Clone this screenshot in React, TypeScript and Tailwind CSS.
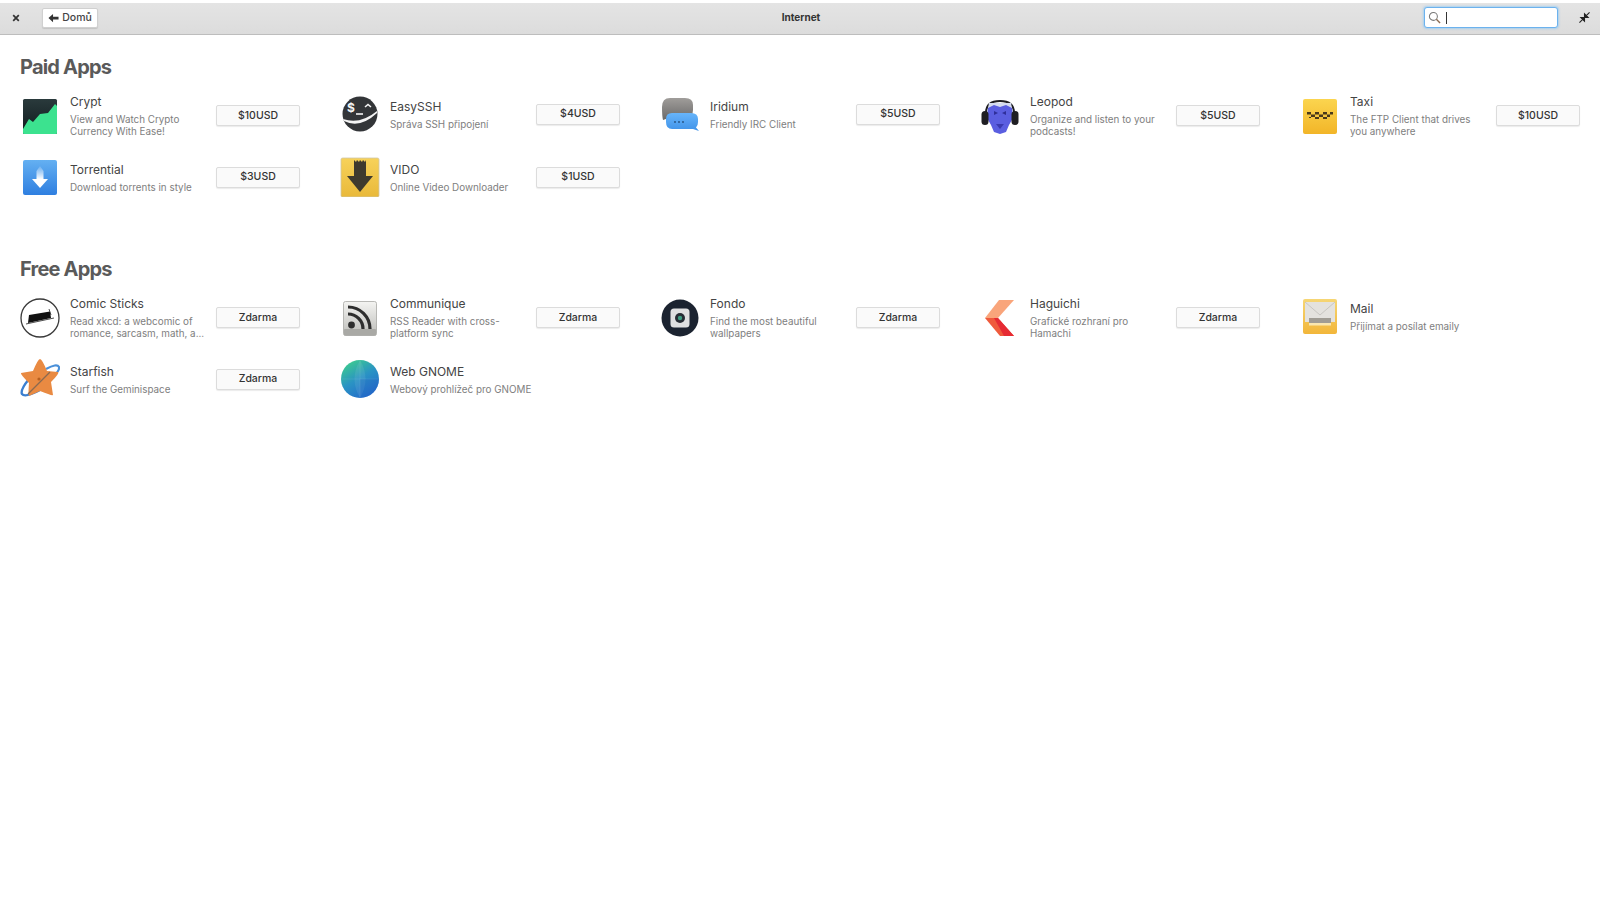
import type { ReactNode } from "react";

type AppItem = {
  name: string;
  description: string;
  price?: string;
  icon: ReactNode;
};

const CryptIcon = (
  <svg viewBox="0 0 40 40" className="h-10 w-10">
    <defs>
      <linearGradient id="crypt-bg" x1="0" y1="0" x2="0" y2="1">
        <stop offset="0" stopColor="#2a3a3c" />
        <stop offset="1" stopColor="#0f1a1d" />
      </linearGradient>
    </defs>
    <rect x="3" y="3" width="34" height="35" rx="1.5" fill="url(#crypt-bg)" />
    <path
      d="M3 33 L9 23 L13 26 L20 18 L28 17 L35 8 L37 10 L37 36.5 Q37 38 35.5 38 L4.5 38 Q3 38 3 36.5 Z"
      fill="#3ce28f"
    />
  </svg>
);

const TorrentialIcon = (
  <svg viewBox="0 0 40 40" className="h-10 w-10">
    <defs>
      <linearGradient id="torrent-bg" x1="0" y1="0" x2="0" y2="1">
        <stop offset="0" stopColor="#64b0f2" />
        <stop offset="1" stopColor="#2f7fe0" />
      </linearGradient>
      <linearGradient id="torrent-arrow" x1="0" y1="0" x2="0" y2="1">
        <stop offset="0" stopColor="#ffffff" stopOpacity="0.1" />
        <stop offset="0.6" stopColor="#ffffff" />
      </linearGradient>
    </defs>
    <rect x="3" y="3" width="34" height="35" rx="2" fill="url(#torrent-bg)" />
    <path
      d="M20 9 L23.5 14 L23.5 22 L28 22 L20 31 L12 22 L16.5 22 L16.5 14 Z"
      fill="url(#torrent-arrow)"
    />
  </svg>
);

const EasySshIcon = (
  <svg viewBox="0 0 40 40" className="h-10 w-10">
    <circle cx="20" cy="20" r="17.5" fill="#333538" />
    <path d="M3 25 Q20 31 37 17 L37 19 Q20 35 4 27 Z" fill="#f4f4f4" />
    <text x="7" y="18" fontSize="12" fontWeight="700" fill="#f4f4f4" fontFamily="Inter, sans-serif">
      $
    </text>
    <path d="M16 20 H23" stroke="#f4f4f4" strokeWidth="1.6" />
    <path d="M25 13 L28 10.5 L31 13" stroke="#f4f4f4" strokeWidth="1.6" fill="none" />
  </svg>
);

const IridiumIcon = (
  <svg viewBox="0 0 40 40" className="h-10 w-10">
    <defs>
      <linearGradient id="iridium-gray" x1="0" y1="0" x2="0" y2="1">
        <stop offset="0" stopColor="#a09d9a" />
        <stop offset="1" stopColor="#6a6a6a" />
      </linearGradient>
      <linearGradient id="iridium-blue" x1="0" y1="0" x2="0" y2="1">
        <stop offset="0" stopColor="#67b5fb" />
        <stop offset="1" stopColor="#3f92e8" />
      </linearGradient>
    </defs>
    <path
      d="M10 4 H25 Q33 4 33 11 V16 Q33 24 25 24 H9 L3 26 Q2 22 2 13 Q2 4 10 4 Z"
      fill="url(#iridium-gray)"
    />
    <path
      d="M12 19 H31 Q38 19 38 25 V28 Q38 32 36 33.5 L39 37 L33 35 H12 Q6 35 6 28 V25 Q6 19 12 19 Z"
      fill="url(#iridium-blue)"
    />
    <circle cx="15" cy="28" r="0.9" fill="#25507e" />
    <circle cx="19" cy="28" r="0.9" fill="#25507e" />
    <circle cx="23" cy="28" r="0.9" fill="#25507e" />
  </svg>
);

const VidoIcon = (
  <svg viewBox="0 0 40 40" className="h-10 w-10">
    <defs>
      <linearGradient id="vido-bg" x1="0" y1="0" x2="0" y2="1">
        <stop offset="0" stopColor="#f7d25a" />
        <stop offset="1" stopColor="#e9b93a" />
      </linearGradient>
    </defs>
    <rect x="1" y="1" width="38" height="39" rx="1.5" fill="url(#vido-bg)" stroke="#cfc6a8" strokeWidth="0.8" />
    <path
      d="M14 3 L16 5 L17 3 L19 5 L20 3 L22 5 L23 3 L25 5 L26 3 V19 H33 L20 35 L7 19 H14 Z"
      fill="#3f3a2e"
    />
  </svg>
);

const LeopodIcon = (
  <svg viewBox="0 0 40 40" className="h-10 w-10">
    <path d="M6 17 Q6 5 20 5 Q34 5 34 17" stroke="#1e1e22" strokeWidth="2" fill="none" />
    <path d="M9 7 H31 L33 18 H7 Z" fill="#d5dcf0" />
    <path
      d="M8 12 L14 9 L20 11 L26 9 L32 12 L33 22 L29 29 L26 36 L20 38 L14 36 L11 29 L7 22 Z"
      fill="#5a5ee0"
    />
    <path d="M14 15 L18 17 L14 19 Z M26 15 L22 17 L26 19 Z" fill="#2f2f9a" />
    <path d="M16 28 H24 L20 33 Z" fill="#3a3ab0" />
    <rect x="1.5" y="15" width="7" height="14" rx="3.5" fill="#1e1e22" />
    <rect x="31.5" y="15" width="7" height="14" rx="3.5" fill="#1e1e22" />
  </svg>
);

const TaxiIcon = (
  <svg viewBox="0 0 40 40" className="h-10 w-10">
    <defs>
      <linearGradient id="taxi-bg" x1="0" y1="0" x2="0" y2="1">
        <stop offset="0" stopColor="#fbd54f" />
        <stop offset="1" stopColor="#f2b528" />
      </linearGradient>
    </defs>
    <rect x="3" y="3" width="34" height="35" rx="2" fill="url(#taxi-bg)" />
    <path
      d="M7 16 h4 v2.5 h-4 z M15 16 h4 v2.5 h-4 z M23 16 h4 v2.5 h-4 z M30 16 h3 v2.5 h-3 z M11 18.5 h4 v2.5 h-4 z M19 18.5 h4 v2.5 h-4 z M27 18.5 h3 v2.5 h-3 z M15 21 h4 v2 h-4 z M23 21 h4 v2 h-4 z M9 21 h2 v1 h-2 z"
      fill="#4a3a1c"
    />
  </svg>
);

const ComicSticksIcon = (
  <svg viewBox="0 0 40 40" className="h-10 w-10">
    <circle cx="20" cy="20" r="19" fill="#ffffff" stroke="#3a3a3a" strokeWidth="1.3" />
    <path d="M9 17 L30 13.5 L31 20 L8 25 Z" fill="#111111" />
    <path d="M6 26 L34 20 M29 11 L31 17" stroke="#222222" strokeWidth="0.8" />
  </svg>
);

const CommuniqueIcon = (
  <svg viewBox="0 0 40 40" className="h-10 w-10">
    <defs>
      <linearGradient id="comm-bg" x1="0" y1="0" x2="0" y2="1">
        <stop offset="0" stopColor="#f4f4f2" />
        <stop offset="1" stopColor="#bdbdb9" />
      </linearGradient>
    </defs>
    <rect x="3.5" y="3.5" width="33" height="34" rx="2" fill="url(#comm-bg)" stroke="#a8a8a4" strokeWidth="0.8" />
    <rect x="4" y="31" width="32" height="6.5" rx="1" fill="#a9a9a5" />
    <circle cx="11.5" cy="27" r="3.4" fill="#2e2e2e" />
    <path d="M8 16 A15 15 0 0 1 23 31" stroke="#2e2e2e" strokeWidth="3.2" fill="none" />
    <path d="M8 9 A22 22 0 0 1 30 31" stroke="#2e2e2e" strokeWidth="3.2" fill="none" />
  </svg>
);

const FondoIcon = (
  <svg viewBox="0 0 40 40" className="h-10 w-10">
    <circle cx="20" cy="20" r="18.5" fill="#1b2330" />
    <rect x="10.5" y="10.5" width="19" height="19" rx="3.5" fill="#dedfe0" />
    <circle cx="20" cy="20" r="5" fill="#262c34" />
    <circle cx="20" cy="20" r="2.2" fill="#3d9b80" />
  </svg>
);

const HaguichiIcon = (
  <svg viewBox="0 0 40 40" className="h-10 w-10">
    <path d="M19 2 H34 L18 20 L9 20 L5 20 Z" fill="#f9a57b" />
    <path d="M5 20 L18 20 L34 38 H20 Z" fill="#ef5a3c" />
    <path d="M14 20 H18 L34 38 H24 Z" fill="#e62a33" />
  </svg>
);

const MailIcon = (
  <svg viewBox="0 0 40 40" className="h-10 w-10">
    <defs>
      <linearGradient id="mail-bg" x1="0" y1="0" x2="0" y2="1">
        <stop offset="0" stopColor="#f6d675" />
        <stop offset="1" stopColor="#f2b63a" />
      </linearGradient>
    </defs>
    <rect x="3" y="3" width="34" height="35" rx="2" fill="url(#mail-bg)" />
    <rect x="5" y="6" width="30" height="20" fill="#e4e2de" />
    <path d="M5 6 L20 19 L35 6" stroke="#c8c6c2" strokeWidth="1" fill="none" />
    <rect x="9" y="22" width="22" height="5" fill="#a09c94" />
    <rect x="9" y="27" width="22" height="2.5" fill="#f9e6b0" />
  </svg>
);

const StarfishIcon = (
  <svg viewBox="0 0 40 40" className="h-10 w-10">
    <path d="M26 10 Q37 4 39 8 Q40 12 31 19" stroke="#4a90d9" strokeWidth="2.2" fill="none" />
    <path d="M9 20 Q0 31 2 35 Q5 39 20 31" stroke="#3b7fd0" strokeWidth="2.4" fill="none" />
    <path
      d="M20 0 Q22 0 27 12 L38 13 Q40 14 31 23 L33 36 Q32 37 20 32 L9 37 Q8 36 9 24 Q0 15 1 14 L13 12 Q18 0 20 0 Z"
      fill="#e98a42"
    />
    <path d="M8 35 L30 13" stroke="#8a6a50" strokeWidth="1.2" />
    <circle cx="19" cy="20" r="1.6" fill="#b9601f" />
  </svg>
);

const WebGnomeIcon = (
  <svg viewBox="0 0 40 40" className="h-10 w-10">
    <defs>
      <linearGradient id="web-bg" x1="0.15" y1="0" x2="0.75" y2="1">
        <stop offset="0" stopColor="#3ed08a" />
        <stop offset="0.5" stopColor="#2a93c4" />
        <stop offset="1" stopColor="#2468cc" />
      </linearGradient>
    </defs>
    <circle cx="20" cy="20" r="19" fill="url(#web-bg)" />
    <path d="M20 1 Q9 20 20 39 Q31 20 20 1 Z" fill="#ffffff" fillOpacity="0.08" />
    <path d="M20 20 H39 A19 19 0 0 1 20 39 Z" fill="#1f5fc0" fillOpacity="0.25" />
    <path d="M1 20 H39 M20 1 V39" stroke="#ffffff" strokeOpacity="0.1" strokeWidth="0.8" />
  </svg>
);

const paidApps: AppItem[] = [
  { name: "Crypt", description: "View and Watch Crypto Currency With Ease!", price: "$10USD", icon: CryptIcon },
  { name: "EasySSH", description: "Správa SSH připojení", price: "$4USD", icon: EasySshIcon },
  { name: "Iridium", description: "Friendly IRC Client", price: "$5USD", icon: IridiumIcon },
  { name: "Leopod", description: "Organize and listen to your podcasts!", price: "$5USD", icon: LeopodIcon },
  { name: "Taxi", description: "The FTP Client that drives you anywhere", price: "$10USD", icon: TaxiIcon },
  { name: "Torrential", description: "Download torrents in style", price: "$3USD", icon: TorrentialIcon },
  { name: "VIDO", description: "Online Video Downloader", price: "$1USD", icon: VidoIcon },
];

const freeApps: AppItem[] = [
  {
    name: "Comic Sticks",
    description: "Read xkcd: a webcomic of romance, sarcasm, math, a...",
    price: "Zdarma",
    icon: ComicSticksIcon,
  },
  { name: "Communique", description: "RSS Reader with cross-platform sync", price: "Zdarma", icon: CommuniqueIcon },
  { name: "Fondo", description: "Find the most beautiful wallpapers", price: "Zdarma", icon: FondoIcon },
  { name: "Haguichi", description: "Grafické rozhraní pro Hamachi", price: "Zdarma", icon: HaguichiIcon },
  { name: "Mail", description: "Přijímat a posílat emaily", icon: MailIcon },
  { name: "Starfish", description: "Surf the Geminispace", price: "Zdarma", icon: StarfishIcon },
  { name: "Web GNOME", description: "Webový prohlížeč pro GNOME", icon: WebGnomeIcon },
];

function AppRow({ app }: { app: AppItem }) {
  return (
    <div className="flex w-[280px] items-center self-start">
      <div className="h-10 w-10 shrink-0">{app.icon}</div>
      <div className="ml-[10px] min-w-0 flex-1">
        <div className="text-[12px] leading-[16px] text-[#444444]">{app.name}</div>
        <div className="mt-[3px] text-[9.85px] leading-[12px] text-[#7e7e7e]">{app.description}</div>
      </div>
      {app.price && (
        <button className="ml-[10px] h-[21px] w-[84px] shrink-0 rounded-[2px] border border-[#dcdcdc] bg-[#fafafa] text-[10.5px] font-medium text-[#333333] shadow-[0_1px_1px_rgba(0,0,0,0.08)]">
          {app.price}
        </button>
      )}
    </div>
  );
}

function Section({ title, apps }: { title: string; apps: AppItem[] }) {
  return (
    <section className="pl-5">
      <h2 className="text-[20px] leading-[26px] font-bold tracking-[-0.8px] text-[#5a5a5a]">{title}</h2>
      <div className="mt-[14px] grid grid-cols-[repeat(5,320px)] gap-y-5">
        {apps.map((app) => (
          <AppRow key={app.name} app={app} />
        ))}
      </div>
    </section>
  );
}

export default function App() {
  return (
    <div className="h-[900px] w-[1600px] overflow-hidden bg-white pt-[3px] font-['Inter',sans-serif]">
      <header className="flex h-[32px] items-center border-b border-[#bdbdbd] bg-gradient-to-b from-[#e4e4e4] to-[#dcdcdc] pb-[2px] pl-[12px] pr-[10px]">
        <div className="flex flex-1 items-center">
          <svg viewBox="0 0 10 10" className="h-2 w-2 text-[#333333]">
            <path d="M1.5 1.5 L8.5 8.5 M8.5 1.5 L1.5 8.5" stroke="currentColor" strokeWidth="2.2" />
          </svg>
          <button className="ml-[22px] flex h-[20px] w-[56px] items-center justify-center rounded-[2px] border border-[#d0d0d0] bg-white text-[10.5px] font-medium text-[#444444] shadow-[0_1px_1px_rgba(0,0,0,0.12)]">
            <svg viewBox="0 0 12 10" className="mr-[3px] h-[10px] w-[11px]">
              <path d="M0.5 5 L5.5 0.5 V3.5 H11.5 V6.5 H5.5 V9.5 Z" fill="#333333" />
            </svg>
            Domů
          </button>
        </div>
        <div className="text-[10px] font-bold text-[#333333]">Internet</div>
        <div className="flex flex-1 items-center justify-end">
          <div className="flex h-[21px] w-[134px] items-center rounded-[3px] border border-[#6cb2ee] bg-white pl-[3px] shadow-[0_0_2px_1px_rgba(100,186,255,0.45)]">
            <svg viewBox="0 0 14 14" className="h-[13px] w-[13px]">
              <circle cx="5.8" cy="5.8" r="4.3" stroke="#777777" strokeWidth="1.1" fill="none" />
              <path d="M9 9 L13 13" stroke="#8a6a50" strokeWidth="1.5" />
            </svg>
            <span className="ml-[5px] h-[12px] w-px bg-[#333333]" />
          </div>
          <svg viewBox="0 0 12 12" className="ml-[21px] h-[11px] w-[11px]">
            <path d="M0.5 11.5 L4 8 M2 6 H6 V10 Z" stroke="#222222" strokeWidth="1.2" fill="#222222" />
            <path d="M11.5 0.5 L8 4 M6 2 V6 H10 Z" stroke="#222222" strokeWidth="1.2" fill="#222222" />
          </svg>
        </div>
      </header>
      <main className="flex flex-col gap-[59px] pt-[19px]">
        <Section title="Paid Apps" apps={paidApps} />
        <Section title="Free Apps" apps={freeApps} />
      </main>
    </div>
  );
}
